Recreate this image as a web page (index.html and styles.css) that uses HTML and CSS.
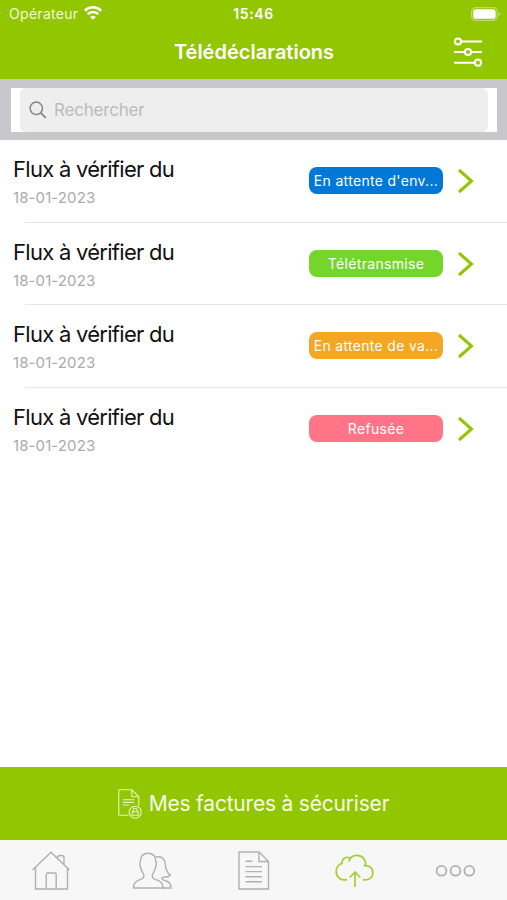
FILE: index.html
```html
<!DOCTYPE html>
<html lang="fr">
<head>
  <meta charset="UTF-8">
  <title>Télédéclarations</title>
  <link rel="stylesheet" href="styles.css">
</head>
<body>
  <div class="app">
    <header class="header">
      <div class="status-bar">
        <div class="carrier">
          <span class="carrier-name">Opérateur</span>
          <svg class="wifi" width="18" height="14" viewBox="0 0 18 14">
            <path d="M.8 4.800a11.500 11.500 0 0 1 16.400 0" fill="none" stroke="#fff" stroke-width="2.500"/>
            <path d="M3.700 8.200a7.500 7.500 0 0 1 10.600 0" fill="none" stroke="#fff" stroke-width="2.500"/>
            <path d="M6.200 10.900a4.200 4.200 0 0 1 5.600 0L9 13.800z" fill="#fff"/>
          </svg>
        </div>
        <span class="time">15:46</span>
        <svg class="battery" width="30" height="14" viewBox="0 0 30 14">
          <rect x=".6" y=".6" width="25.6" height="12.8" rx="4" fill="none" stroke="#fff" stroke-opacity=".4" stroke-width="1.2"/>
          <rect x="2.2" y="2.2" width="22.4" height="9.6" rx="2.6" fill="#fff"/>
          <path d="M27.6 5v4c1.2-.5 1.8-1.1 1.8-2s-.6-1.5-1.8-2z" fill="#fff" fill-opacity=".4"/>
        </svg>
      </div>
      <div class="title-bar">
        <h1>Télédéclarations</h1>
        <svg class="filters" width="30" height="32" viewBox="0 0 30 32" fill="none" stroke="#fff" stroke-width="2">
          <path d="M8 5.5h21M1 16h10M18 16h11M1 26.7h20"/>
          <circle cx="5" cy="5.5" r="3.1"/>
          <circle cx="15" cy="16" r="3.1"/>
          <circle cx="25" cy="26.7" r="3.1"/>
        </svg>
      </div>
    </header>

    <div class="search">
      <div class="search-box">
        <div class="search-field">
          <svg width="18" height="18" viewBox="0 0 18 18" fill="none" stroke="#858587" stroke-width="1.5">
            <circle cx="7.3" cy="7.3" r="6.2"/>
            <path d="M11.8 11.8l5 5" stroke-width="1.8"/>
          </svg>
          <span>Rechercher</span>
        </div>
      </div>
    </div>

    <main class="list">
      <div class="row">
        <div class="row-text">
          <div class="label">Flux à vérifier du</div>
          <div class="date">18-01-2023</div>
        </div>
        <span class="badge waiting">En attente d'env...</span>
        <svg class="chevron" width="18" height="26" viewBox="0 0 18 26"><path d="M2 2l12.5 11L2 24"/></svg>
      </div>
      <div class="row">
        <div class="row-text">
          <div class="label">Flux à vérifier du</div>
          <div class="date">18-01-2023</div>
        </div>
        <span class="badge sent">Télétransmise</span>
        <svg class="chevron" width="18" height="26" viewBox="0 0 18 26"><path d="M2 2l12.5 11L2 24"/></svg>
      </div>
      <div class="row">
        <div class="row-text">
          <div class="label">Flux à vérifier du</div>
          <div class="date">18-01-2023</div>
        </div>
        <span class="badge pending">En attente de va...</span>
        <svg class="chevron" width="18" height="26" viewBox="0 0 18 26"><path d="M2 2l12.5 11L2 24"/></svg>
      </div>
      <div class="row">
        <div class="row-text">
          <div class="label">Flux à vérifier du</div>
          <div class="date">18-01-2023</div>
        </div>
        <span class="badge refused">Refusée</span>
        <svg class="chevron" width="18" height="26" viewBox="0 0 18 26"><path d="M2 2l12.5 11L2 24"/></svg>
      </div>
    </main>

    <div class="secure">
      <svg width="24" height="30" viewBox="0 0 24 30" fill="none" stroke="#e6f4bf" stroke-width="1.1">
        <path d="M10.5 26.3H.8V.8h13l7 7v9M13.8.8v7h7M4.8 10.8h11.4M4.8 13.4h11.4M4.8 16h6.5"/>
        <circle cx="17.2" cy="23.2" r="6"/>
        <path d="M14.2 22.8h6v3.4h-6zM15.4 22.6v-1.5a1.8 1.8 0 0 1 3.6 0v1.5"/>
      </svg>
      <span>Mes factures à sécuriser</span>
    </div>

    <nav class="tabs">
      <div class="tab">
        <svg width="40" height="40" viewBox="0 0 40 40">
          <path d="M1.5 20L20 2.300 38.500 20M4.500 17.500V39h32V17.500M15.200 39V24.500q0-1.500 1.500-1.500h7q1.500 0 1.500 1.500V39M26.500 8q0-2.500 2.500-2.500h1.500q2.500 0 2.500 2.500v6"/>
        </svg>
      </div>
      <div class="tab">
        <svg width="40" height="40" viewBox="0 0 40 40">
          <path d="M1.500 38c-.3-5.200 2.700-7 6.700-8.300 3.200-1 4.300-2.700 3.500-5.400-1.600-2.200-2.800-4.300-3.100-7-1.300-2.700-1-4.700-.1-6.500C8.700 5.800 11 3.200 16 3.200s7.500 2.600 7.700 7.600c.9 1.800 1.100 3.800-.2 6.500-.4 2.700-1.500 4.800-3 7-.8 2.700.4 4.400 3.500 5.400 4.300 1.300 7.300 3.200 7 8.300z"/>
          <path d="M23.300 7.200c5.800-1.700 9.300 1.300 9.900 6.500.3 4 .8 8.300 5.100 11.400-.8 1.700-3.800 1.900-7.200 2-2.200.7-1.200 2.600 1.200 3.200 5 1.200 6.900 3.500 6.700 7.700h-8.500"/>
        </svg>
      </div>
      <div class="tab">
        <svg width="40" height="40" viewBox="0 0 40 40">
          <path d="M5 2h20l9.500 9.500V39H5zM25 2v9.500h9.500M11.500 11.300h7M11.500 16.600H28M11.500 21.600H28M11.500 26.800H28M11.500 31.800H28"/>
        </svg>
      </div>
      <div class="tab active">
        <svg width="40" height="40" viewBox="0 0 40 40">
          <path d="M12 29.700c-6 1.300-10.800-2.500-10.800-8.300 0-4.500 2.800-7.400 5.800-8.100-.5-4.700 4.700-7.800 8.800-4.800M13.700 11.500c1.300-4 4.300-6.200 8-6.200 5.800 0 9.500 4.400 8.900 10.400 4.800.4 7.200 3 7.200 7.300 0 4.500-3.800 7.700-9.800 6.700M30.600 15.700l-2-.3M20 37V22.500M14.700 27.500l5.300-5.500 5.300 5.500"/>
        </svg>
      </div>
      <div class="tab">
        <svg width="40" height="40" viewBox="0 0 40 40">
          <g class="dots">
            <circle cx="5.500" cy="20.800" r="4.900"/>
            <circle cx="19.500" cy="20.800" r="4.900"/>
            <circle cx="33.300" cy="20.800" r="4.900"/>
          </g>
        </svg>
      </div>
    </nav>
  </div>
</body>
</html>
```
FILE: styles.css
```css
* {
  box-sizing: border-box;
}
body {
  margin: 0;
  font-family: Inter, "Liberation Sans", sans-serif;
  background: #fff;
}
.app {
  height: 900px;
  display: flex;
  flex-direction: column;
  overflow: hidden;
}

/* Header */
.header {
  height: 79px;
  background: #92c600;
  color: #fff;
}
.status-bar {
  height: 27px;
  display: grid;
  grid-template-columns: 1fr auto 1fr;
  align-items: center;
  padding: 0 6px 0 9px;
  font-size: 14px;
}
.carrier {
  display: flex;
  align-items: center;
  gap: 6px;
}
.carrier-name {
  color: #f1f9d8;
  letter-spacing: 0.3px;
}
.wifi {
  margin-top: -2px;
}
.time {
  margin-right: 3px;
  font-weight: 600;
  letter-spacing: 0.6px;
}
.battery {
  justify-self: end;
}
.title-bar {
  height: 50px;
  display: grid;
  grid-template-columns: 1fr auto 1fr;
  align-items: center;
  padding: 0 24px 0 25px;
}
.title-bar h1 {
  grid-column: 2;
  margin: 0;
  font-size: 20px;
  font-weight: 600;
}
.filters {
  justify-self: end;
}

/* Search */
.search {
  height: 61px;
  padding: 9px 10px 8px 11px;
  background: #c8c7cc;
}
.search-box {
  height: 44px;
  padding: 0 9px;
  background: #fff;
}
.search-field {
  height: 44px;
  display: flex;
  align-items: center;
  gap: 7px;
  padding-left: 9px;
  border-radius: 6px;
  background: #eee;
  color: #bbb;
  font-size: 17px;
  letter-spacing: -0.2px;
}

/* List */
.list {
  flex: 1;
}
.row {
  height: 82.6px;
  display: flex;
  align-items: center;
  padding: 0 32px 0 13px;
  background: linear-gradient(#e6e6e6, #e6e6e6) 25px 100% / 100% 1px no-repeat;
}
.row:last-child {
  background: none;
}
.row-text {
  flex: 1;
  padding-top: 1px;
}
.label {
  color: #111;
  font-size: 22px;
  line-height: 28px;
  letter-spacing: -0.72px;
}
.date {
  margin-top: 5px;
  color: #aaa;
  font-size: 15px;
  line-height: 20px;
  letter-spacing: 0.1px;
}
.badge {
  width: 134px;
  height: 27px;
  margin: 0 14px 1px 0;
  border-radius: 8px;
  color: #fff;
  font-size: 14px;
  line-height: 27px;
  letter-spacing: 0.32px;
  text-align: center;
  white-space: nowrap;
}
.waiting {
  background: #0078d7;
}
.sent {
  background: #74d62a;
}
.pending {
  background: #f5a623;
}
.refused {
  background: #ff7587;
}
.chevron path {
  fill: none;
  stroke: #92c600;
  stroke-width: 3;
}

/* Bottom button */
.secure {
  height: 73px;
  display: flex;
  align-items: center;
  justify-content: center;
  gap: 7px;
  background: #92c600;
  color: #f8fce9;
  font-size: 21px;
  letter-spacing: -0.2px;
}

/* Tab bar */
.tabs {
  height: 60px;
  display: flex;
  background: #f7f7f7;
}
.tab {
  flex: 1;
  display: flex;
  align-items: center;
  justify-content: center;
}
.tab svg {
  fill: none;
  stroke: #b0b0b0;
  stroke-width: 1.4;
}
.tab .dots {
  stroke-width: 1.8;
}
.tab.active svg {
  stroke: #a5cf30;
  stroke-width: 1.7;
}
```
